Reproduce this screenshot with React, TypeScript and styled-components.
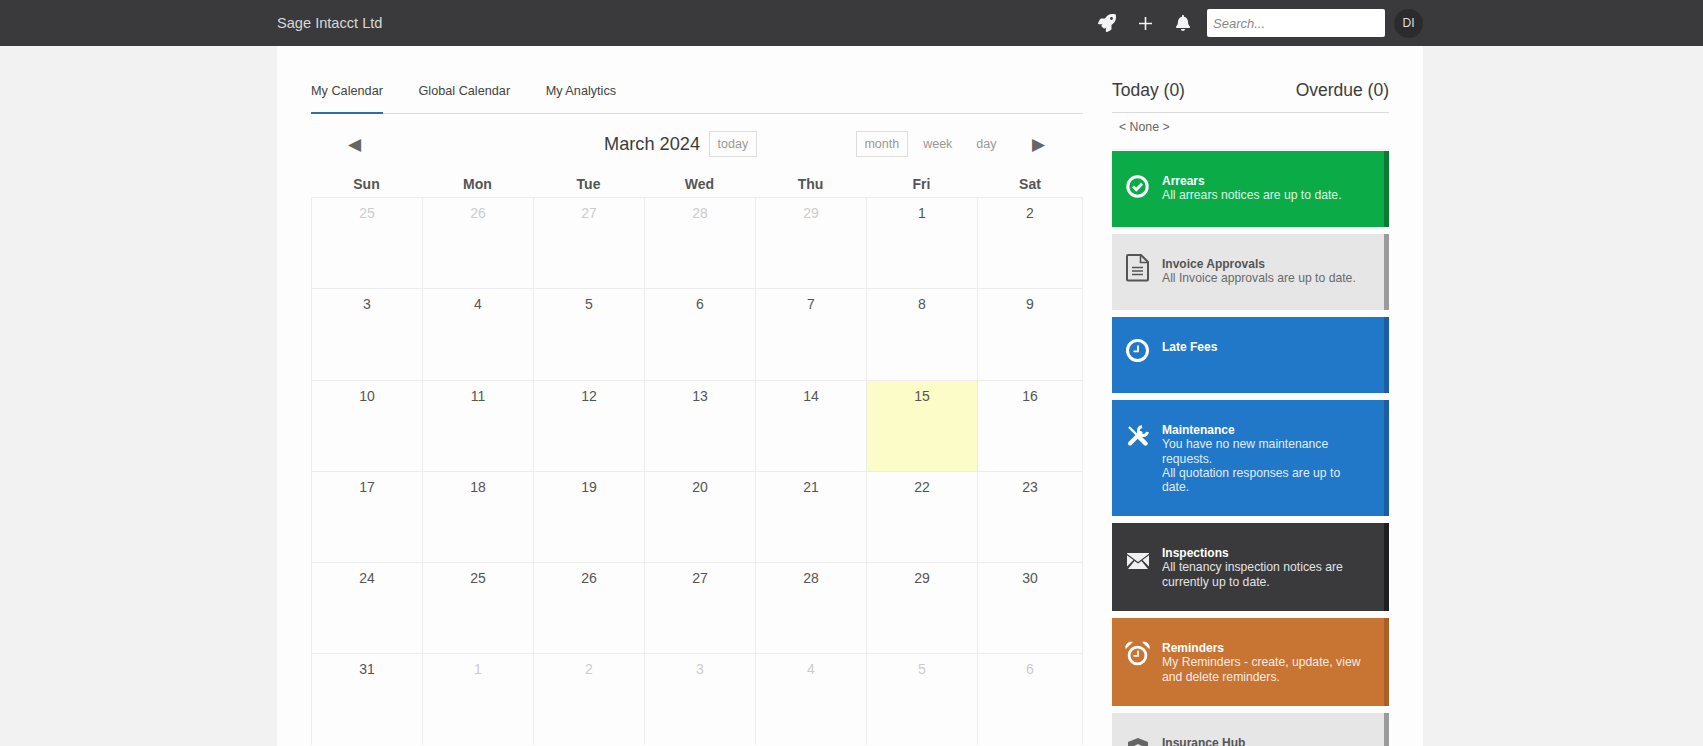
import styled, { createGlobalStyle } from "styled-components";
import { ReactNode } from "react";
import { FaBell, FaRocket } from "react-icons/fa";

const GlobalStyle = createGlobalStyle`
  html, body {
    margin: 0;
    height: 100%;
    overflow: hidden;
    background: #f2f2f2;
    font-family: "Liberation Sans", Arial, sans-serif;
    color: #444;
  }
  * { box-sizing: border-box; }
`;

const Page = styled.div`
  height: 746px;
  overflow: hidden;
`;
const TopBar = styled.header`
  height: 46px;
  padding-right: 3px;
  background: #3a3a3c;
  display: flex;
  justify-content: center;
`;
const TopInner = styled.div`
  width: 1146px;
  display: flex;
  align-items: center;
`;
const Brand = styled.div`
  color: #d8d8d8;
  font-size: 14.6px;
  flex: 1;
`;
const TopIcon = styled.span<{ $size: number }>`
  color: #f4f4f4;
  font-size: ${(p) => p.$size}px;
  width: 38px;
  display: flex;
  justify-content: center;
`;
const Search = styled.input`
  width: 178px;
  height: 28px;
  margin-left: 5px;
  border: 0;
  border-radius: 2px;
  background: #fff;
  padding: 0 6px;
  font: italic 13px "Liberation Sans", Arial, sans-serif;
  &::placeholder {
    color: #888;
    opacity: 1;
  }
`;
const Avatar = styled.div`
  width: 29px;
  height: 29px;
  margin-left: 9px;
  border-radius: 50%;
  background: #2b2b2d;
  color: #ddd;
  font-size: 12px;
  display: flex;
  align-items: center;
  justify-content: center;
`;
const PanelRow = styled.div`
  padding-right: 3px;
  display: flex;
  justify-content: center;
`;
const Panel = styled.main`
  width: 1146px;
  height: 700px;
  background: #fdfdfd;
  padding: 32px 34px 0;
  display: flex;
  gap: 29px;
  overflow: hidden;
`;
const CalendarCol = styled.section`
  width: 772px;
  flex: none;
`;
const Tabs = styled.nav`
  height: 36px;
  display: flex;
  gap: 35.5px;
  border-bottom: 1px solid #d9dadc;
`;
const Tab = styled.div<{ $active?: boolean }>`
  height: 36px;
  padding-top: 6px;
  font-size: 12.7px;
  color: #444;
  border-bottom: 2px solid ${(p) => (p.$active ? "#2f6f9e" : "transparent")};
`;
const Toolbar = styled.div`
  height: 50px;
  display: grid;
  grid-template-columns: 256px auto 1fr;
  align-items: start;
  padding: 17px 38px 0 37px;
`;
const Arrow = styled.span`
  color: #666;
  font-size: 17px;
  line-height: 28px;
`;
const ToolCenter = styled.div`
  display: flex;
  align-items: center;
  gap: 9px;
`;
const ToolRight = styled.div`
  display: flex;
  align-items: flex-start;
  justify-content: flex-end;
`;
const MonthTitle = styled.div`
  font-size: 18.2px;
  color: #3c3c3c;
`;
const ViewButton = styled.div<{ $boxed?: boolean }>`
  height: 26px;
  padding: 0 7.5px;
  font-size: 12.5px;
  color: #999;
  display: flex;
  align-items: center;
  border: 1px solid ${(p) => (p.$boxed ? "#ddd" : "transparent")};
`;
const Views = styled.div`
  display: flex;
  gap: 7px;
  margin-right: 27px;
`;
const Grid = styled.div`
  display: grid;
  grid-template-columns: repeat(6, 111px) 106px;
`;
const DayName = styled.div`
  height: 33px;
  padding-top: 12px;
  font-size: 14px;
  font-weight: 700;
  color: #555;
  text-align: center;
`;
const Cell = styled.div<{ $muted?: boolean; $today?: boolean }>`
  height: 91.3px;
  padding-top: 7px;
  font-size: 14px;
  text-align: center;
  color: ${(p) => (p.$muted ? "#ccc" : "#555")};
  background: ${(p) => (p.$today ? "#fbfcc8" : "transparent")};
  border-left: 1px solid #ececec;
  border-top: 1px solid #ececec;
  &:nth-child(7n) {
    border-right: 1px solid #ececec;
  }
`;
const SideCol = styled.aside`
  width: 277px;
  flex: none;
`;
const SideHead = styled.div`
  height: 35px;
  display: flex;
  justify-content: space-between;
  font-size: 17.5px;
  color: #3c3c3c;
  padding-top: 2px;
  border-bottom: 1px solid #d9dadc;
`;
const NoneRow = styled.div`
  height: 37px;
  padding: 7px 7px 0;
  font-size: 12.3px;
  color: #666;
  border-bottom: 1px solid #eee;
`;
const Cards = styled.div`
  padding-top: 1px;
  display: flex;
  flex-direction: column;
  gap: 7px;
`;
const Card = styled.div<{ $bg: string; $bar: string; $fg: string; $h: number }>`
  height: ${(p) => p.$h}px;
  flex: none;
  background: ${(p) => p.$bg};
  color: ${(p) => p.$fg};
  border-right: 5px solid ${(p) => p.$bar};
  padding: 23px 17px 0 13px;
  display: flex;
  gap: 12px;
`;
const CardIcon = styled.div`
  width: 25px;
  height: 25px;
  flex: none;
  display: flex;
  align-items: center;
  justify-content: center;
`;
const CardText = styled.div`
  font-size: 12.2px;
  line-height: 14.3px;
`;
const CardTitle = styled.div`
  font-size: 12px;
  font-weight: 700;
`;
const CardLine = styled.div`
  opacity: 0.86;
`;

function CheckRing() {
  return (
    <svg width="23" height="23" viewBox="0 0 23 23" fill="none" stroke="#fff">
      <circle cx="11.500" cy="11.500" r="9.700" strokeWidth="3" />
      <path d="M7 11.500l3.300 3.300 5.700-6" strokeWidth="2.800" />
    </svg>
  );
}

function FileLines() {
  return (
    <svg width="23" height="31" viewBox="0 0 23 31" fill="none" stroke="#555">
      <path d="M2 1h13l7 7v17.500a1 1 0 0 1-1 1H2a1 1 0 0 1-1-1V2a1 1 0 0 1 1-1z" strokeWidth="2" />
      <path d="M14.500 1v7.500H22" strokeWidth="1.600" />
      <path d="M6 13.500h11M6 17h11M6 20.500h11" strokeWidth="1.700" />
    </svg>
  );
}

function ClockRing() {
  return (
    <svg width="23" height="28" viewBox="0 0 23 28" fill="none" stroke="#fff">
      <circle cx="11.500" cy="11.500" r="10" strokeWidth="3" />
      <path d="M12 6.500v5.800H7.500" strokeWidth="1.800" />
    </svg>
  );
}

function CrossedTools() {
  return (
    <svg width="22" height="21" viewBox="0 0 22 21" fill="none" stroke="#fff">
      <path d="M3 18.500 13.500 8" strokeWidth="4" strokeLinecap="round" />
      <path d="M15 1.500A4.600 4.600 0 1 0 20.500 7" strokeWidth="3" />
      <path d="M2 2l9 9" strokeWidth="2.400" />
      <path d="M11 11l7.500 7.500" strokeWidth="4.400" strokeLinecap="round" />
    </svg>
  );
}

function Envelope() {
  return (
    <svg width="22" height="20" viewBox="0 0 22 20" fill="#f0f0f0">
      <path d="M0 4h22v.8L11 13 0 4.800zM0 6.300v11.200l6.500-6.400zM22 6.300l-6.500 4.800 6.500 6.400zM7.500 11.900 1 20h20l-6.500-8.100L11 14.500z" />
    </svg>
  );
}

function AlarmClock() {
  return (
    <svg width="25" height="25" viewBox="0 0 25 25" fill="none" stroke="#fff">
      <circle cx="12.500" cy="14.500" r="8.400" strokeWidth="2.800" />
      <path d="M13 9.500v5.300H8.500" strokeWidth="1.700" />
      <path d="M.8 7.500C.3 3.500 3.300.6 7.300 1.200zM24.200 7.500C24.700 3.500 21.700.6 17.700 1.200z" fill="#fff" strokeWidth=".8" />
    </svg>
  );
}

function Shield() {
  return (
    <svg width="20" height="21" viewBox="0 0 20 21" fill="#666">
      <path d="M10 0 20 4v9c0 4-5 6-10 8C5 19 0 17 0 13V4zM10 6 6 8v3h8V8z" fillRule="evenodd" />
    </svg>
  );
}

const BLUE = { $bg: "#2278c8", $bar: "#1d5ea1", $fg: "#fff" };
const GREY = { $bg: "#e6e6e6", $bar: "#9b9b9b", $fg: "#555" };

type CardData = {
  title: string;
  lines?: string[];
  icon: ReactNode;
  tone: { $bg: string; $bar: string; $fg: string };
  h: number;
};

const cards: CardData[] = [
  {
    title: "Arrears",
    lines: ["All arrears notices are up to date."],
    icon: <CheckRing />,
    tone: { $bg: "#0bab47", $bar: "#0a7a35", $fg: "#fff" },
    h: 76,
  },
  {
    title: "Invoice Approvals",
    lines: ["All Invoice approvals are up to date."],
    icon: <FileLines />,
    tone: GREY,
    h: 76,
  },
  { title: "Late Fees", icon: <ClockRing />, tone: BLUE, h: 76 },
  {
    title: "Maintenance",
    lines: ["You have no new maintenance requests.", "All quotation responses are up to date."],
    icon: <CrossedTools />,
    tone: BLUE,
    h: 116,
  },
  {
    title: "Inspections",
    lines: ["All tenancy inspection notices are currently up to date."],
    icon: <Envelope />,
    tone: { $bg: "#3a3a3c", $bar: "#1f1f23", $fg: "#fff" },
    h: 88,
  },
  {
    title: "Reminders",
    lines: ["My Reminders - create, update, view and delete reminders."],
    icon: <AlarmClock />,
    tone: { $bg: "#c87433", $bar: "#aa6028", $fg: "#fff" },
    h: 88,
  },
  { title: "Insurance Hub", icon: <Shield />, tone: GREY, h: 76 },
];

const dayNames = ["Sun", "Mon", "Tue", "Wed", "Thu", "Fri", "Sat"];

// march 2024 starts on a friday, so the grid opens with five days of february
const days = [
  ...[25, 26, 27, 28, 29].map((d) => ({ d, muted: true })),
  ...Array.from({ length: 31 }, (_, i) => ({ d: i + 1, muted: false })),
  ...[1, 2, 3, 4, 5, 6].map((d) => ({ d, muted: true })),
];

export default function App() {
  return (
    <Page>
      <GlobalStyle />
      <TopBar>
        <TopInner>
          <Brand>Sage Intacct Ltd</Brand>
          <TopIcon $size={18}>
            <FaRocket />
          </TopIcon>
          <TopIcon $size={13}>
            <svg width="13" height="13" viewBox="0 0 13 13" stroke="#f4f4f4" strokeWidth="1.600">
              <path d="M6.500 0v13M0 6.500h13" />
            </svg>
          </TopIcon>
          <TopIcon $size={16}>
            <FaBell />
          </TopIcon>
          <Search placeholder="Search..." />
          <Avatar>DI</Avatar>
        </TopInner>
      </TopBar>
      <PanelRow>
        <Panel>
          <CalendarCol>
            <Tabs>
              <Tab $active>My Calendar</Tab>
              <Tab>Global Calendar</Tab>
              <Tab>My Analytics</Tab>
            </Tabs>
            <Toolbar>
              <div>
                <Arrow>◀</Arrow>
              </div>
              <ToolCenter>
                <MonthTitle>March 2024</MonthTitle>
                <ViewButton $boxed>today</ViewButton>
              </ToolCenter>
              <ToolRight>
                <Views>
                  <ViewButton $boxed>month</ViewButton>
                  <ViewButton>week</ViewButton>
                  <ViewButton>day</ViewButton>
                </Views>
                <Arrow>▶</Arrow>
              </ToolRight>
            </Toolbar>
            <Grid>
              {dayNames.map((n) => (
                <DayName key={n}>{n}</DayName>
              ))}
              {days.map((c, i) => (
                <Cell key={i} $muted={c.muted} $today={!c.muted && c.d === 15}>
                  {c.d}
                </Cell>
              ))}
            </Grid>
          </CalendarCol>
          <SideCol>
            <SideHead>
              <span>Today (0)</span>
              <span>Overdue (0)</span>
            </SideHead>
            <NoneRow>&lt; None &gt;</NoneRow>
            <Cards>
              {cards.map((c) => (
                <Card key={c.title} {...c.tone} $h={c.h}>
                  <CardIcon>{c.icon}</CardIcon>
                  <CardText>
                    <CardTitle>{c.title}</CardTitle>
                    {c.lines?.map((l) => (
                      <CardLine key={l}>{l}</CardLine>
                    ))}
                  </CardText>
                </Card>
              ))}
            </Cards>
          </SideCol>
        </Panel>
      </PanelRow>
    </Page>
  );
}
